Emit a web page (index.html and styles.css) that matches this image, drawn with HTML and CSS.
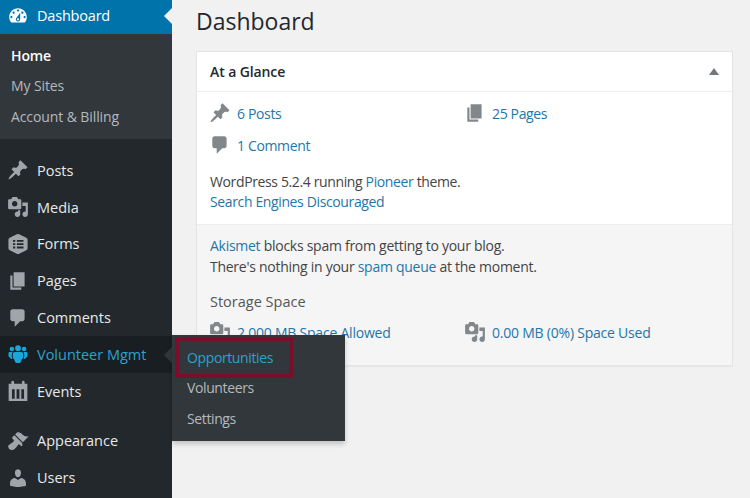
FILE: index.html
```html
<!DOCTYPE html>
<html lang="en">
<head>
<meta charset="utf-8">
<title>Dashboard</title>
<link rel="stylesheet" href="styles.css">
</head>
<body>
<svg class="defs" width="0" height="0" aria-hidden="true">
  <symbol id="i-dash" viewBox="0 0 20 20"><path d="M3.76 16h12.48c1.1-1.37 1.76-3.11 1.76-5 0-4.42-3.58-8-8-8s-8 3.58-8 8c0 1.89.66 3.63 1.76 5zM10 4c.55 0 1 .45 1 1s-.45 1-1 1-1-.45-1-1 .45-1 1-1zM6 6c.55 0 1 .45 1 1s-.45 1-1 1-1-.45-1-1 .45-1 1-1zm8 0c.55 0 1 .45 1 1s-.45 1-1 1-1-.45-1-1 .45-1 1-1zm-5.37 5.55L12 7v6c0 1.1-.9 2-2 2s-2-.9-2-2c0-.57.24-1.08.63-1.45zM4 10c.55 0 1 .45 1 1s-.45 1-1 1-1-.45-1-1 .45-1 1-1zm12 0c.55 0 1 .45 1 1s-.45 1-1 1-1-.45-1-1 .45-1 1-1zm-5 3c0-.55-.45-1-1-1s-1 .45-1 1 .45 1 1 1 1-.45 1-1z"/></symbol>
  <symbol id="i-post" viewBox="0 0 20 20"><path d="M10.44 3.02l1.82-1.82 6.36 6.35-1.83 1.82c-1.05-.68-2.48-.57-3.41.36l-.75.75c-.92.93-1.04 2.35-.35 3.41l-1.83 1.82-2.41-2.41-2.8 2.79c-.42.42-3.38 2.71-3.8 2.29s1.86-3.39 2.28-3.81l2.79-2.79L4.1 9.36l1.83-1.82c1.05.69 2.48.57 3.4-.36l.75-.75c.93-.92 1.05-2.35.36-3.41z"/></symbol>
  <symbol id="i-media" viewBox="0 0 20 20"><path d="M13 11V4c0-.55-.45-1-1-1h-1.67L9 1H5L3.67 3H2c-.55 0-1 .45-1 1v7c0 .55.45 1 1 1h10c.55 0 1-.45 1-1zM7 4.5c1.38 0 2.5 1.12 2.5 2.5S8.38 9.5 7 9.5 4.5 8.38 4.5 7 5.62 4.5 7 4.5zM14 6h5v10.5c0 1.38-1.12 2.5-2.5 2.5S14 17.88 14 16.5s1.12-2.5 2.5-2.5c.17 0 .34.02.5.05V9h-3V6zm-4 8.05V13h2v3.5c0 1.38-1.12 2.5-2.5 2.5S7 17.88 7 16.5 8.12 14 9.5 14c.17 0 .34.02.5.05z"/></symbol>
  <symbol id="i-forms" viewBox="0 0 20 20"><path fill-rule="evenodd" d="M8.900 1.100q1.100-.5 2.200 0l6.400 3.200q1.200.6 1.200 1.900v7.600q0 1.300-1.200 1.900l-6.400 3.200q-1.100.5-2.200 0l-6.400-3.200q-1.200-.6-1.200-1.900V6.200q0-1.300 1.200-1.900zM5.500 6.300v1.700h2V6.300zM9 6.300v1.700h6V6.300zM5.500 9.300V11h2V9.300zM9 9.300V11h6V9.300zM5.500 12.300V14h2v-1.700zM9 12.300V14h6v-1.700z"/></symbol>
  <symbol id="i-page" viewBox="0 0 20 20"><path d="M6 15V2h10v13H6zm-1 1h8v2H3V5h2v11z"/></symbol>
  <symbol id="i-comment" viewBox="0 0 20 20"><path d="M5 2h9c1.100 0 2 .9 2 2v7c0 1.100-.9 2-2 2h-2l-5 5v-5H5c-1.100 0-2-.9-2-2V4c0-1.100.9-2 2-2z"/></symbol>
  <symbol id="i-people" viewBox="-1 -1 22 22"><circle cx="10" cy="4.200" r="2.900"/><circle cx="3.900" cy="5" r="2.300"/><circle cx="16.100" cy="5" r="2.300"/><path d="M6.800 8h6.400c1.200 0 2 .8 2 2v3c0 1-.5 1.700-1.200 2.100l-1.300 3.100c-.3.6-.8.8-1.300.8H8.600c-.5 0-1-.2-1.300-.8L6 15.100C5.300 14.700 4.800 14 4.800 13v-3c0-1.200.8-2 2-2z"/><path d="M1.800 8h2.900c-.5.500-.9 1.200-.9 2v3c0 .8.200 1.400.6 2H3.500c-.4 0-.7-.2-.9-.5L.9 12.800c-.3-.3-.4-.7-.4-1.100V9.300C.5 8.600 1.100 8 1.800 8zM15.300 8h2.900c.7 0 1.300.6 1.300 1.300v2.400c0 .4-.1.800-.4 1.100l-1.700 1.700c-.2.300-.5.500-.9.500h-.9c.4-.6.600-1.200.6-2v-3c0-.8-.4-1.500-.9-2z"/></symbol>
  <symbol id="i-events" viewBox="0 0 20 20"><path fill-rule="evenodd" d="M1.500 3.500h2.500V1.800a1.200 1.200 0 0 1 2.400 0v1.700h7.200V1.800a1.200 1.200 0 0 1 2.400 0v1.700h2.500V19h-17zM4.500 8.500V17H7V8.500zm4.200 0V17h2.600V8.500zm4.300 0V17h2.500V8.500z"/></symbol>
  <symbol id="i-brush" viewBox="0 0 20 20"><path d="M14.480 11.060L7.410 3.990l1.500-1.500c.5-.56 2.300-.47 3.510.32 1.210.8 1.430 1.280 2.910 2.100 1.180.64 2.450 1.260 4.450.85zm-.71.71L6.700 4.700 4.930 6.470c-.39.39-.39 1.020 0 1.410l1.060 1.060c.39.39.39 1.030 0 1.420-.6.6-1.430 1.110-2.210 1.690-.35.26-.7.53-1.010.84C1.430 13.230.91 14.100 1.200 15.790c.32 1.170 1.160 2.220 2.550 2.380 1.680.3 2.520-.23 3.860-1.580.31-.31.58-.66.84-1.010.58-.78 1.090-1.610 1.690-2.210.39-.39 1.030-.39 1.420 0l1.060 1.060c.39.39 1.020.39 1.410 0z"/></symbol>
  <symbol id="i-users" viewBox="0 0 20 20"><path d="M10 9.250c-2.270 0-2.730-3.440-2.730-3.440C7 4.020 7.820 2 9.970 2c2.160 0 2.980 2.020 2.710 3.810 0 0-.41 3.440-2.680 3.440zm0 2.570L12.720 10c2.390 0 4.520 2.330 4.520 4.530v2.490s-3.650 1.130-7.240 1.130c-3.650 0-7.240-1.130-7.240-1.130v-2.490c0-2.250 1.940-4.480 4.470-4.480z"/></symbol>
</svg>

<div class="app">
  <nav class="sidebar">
    <a class="item item-current"><svg class="icon"><use href="#i-dash"/></svg><span>Dashboard</span></a>
    <ul class="submenu">
      <li class="sub-home">Home</li>
      <li>My Sites</li>
      <li>Account &amp; Billing</li>
    </ul>
    <div class="group">
      <a class="item"><svg class="icon"><use href="#i-post"/></svg><span>Posts</span></a>
      <a class="item"><svg class="icon"><use href="#i-media"/></svg><span>Media</span></a>
      <a class="item"><svg class="icon"><use href="#i-forms"/></svg><span>Forms</span></a>
      <a class="item"><svg class="icon"><use href="#i-page"/></svg><span>Pages</span></a>
      <a class="item"><svg class="icon"><use href="#i-comment"/></svg><span>Comments</span></a>
      <div class="item item-open">
        <svg class="icon"><use href="#i-people"/></svg><span>Volunteer Mgmt</span>
        <div class="flyout">
          <div class="fly-row fly-active">Opportunities</div>
          <div class="fly-row">Volunteers</div>
          <div class="fly-row">Settings</div>
          <div class="highlight"></div>
        </div>
      </div>
      <a class="item"><svg class="icon"><use href="#i-events"/></svg><span>Events</span></a>
    </div>
    <div class="group group-last">
      <a class="item"><svg class="icon"><use href="#i-brush"/></svg><span>Appearance</span></a>
      <a class="item"><svg class="icon"><use href="#i-users"/></svg><span>Users</span></a>
    </div>
  </nav>

  <main class="main">
    <h1 class="title">Dashboard</h1>
    <section class="card">
      <header class="card-head">
        <h2>At a Glance</h2>
        <span class="caret"></span>
      </header>
      <div class="card-body">
        <div class="counts">
          <a class="count"><svg class="count-icon"><use href="#i-post"/></svg>6 Posts</a>
          <a class="count"><svg class="count-icon"><use href="#i-page"/></svg>25 Pages</a>
          <a class="count"><svg class="count-icon"><use href="#i-comment"/></svg>1 Comment</a>
        </div>
        <p class="version">WordPress 5.2.4 running <a>Pioneer</a> theme.<br><a>Search Engines Discouraged</a></p>
      </div>
      <div class="card-foot">
        <p class="akismet"><a>Akismet</a> blocks spam from getting to your blog.<br>There's nothing in your <a>spam queue</a> at the moment.</p>
        <h3>Storage Space</h3>
        <div class="storage">
          <a class="count"><svg class="count-icon"><use href="#i-media"/></svg>2,000 MB Space Allowed</a>
          <a class="count"><svg class="count-icon"><use href="#i-media"/></svg>0.00 MB (0%) Space Used</a>
        </div>
      </div>
    </section>
  </main>
</div>
</body>
</html>
```

FILE: styles.css
```css
* { box-sizing: border-box; }
html, body { height: 100%; }
body {
  margin: 0;
  overflow: hidden;
  background: #f1f1f1;
  font-family: "Open Sans", "Noto Sans", sans-serif;
  font-size: 14px;
  color: #444;
}
.defs { position: absolute; }
a { color: #1f76a8; text-decoration: none; }
ul { list-style: none; margin: 0; padding: 0; }
p, h1, h2, h3 { margin: 0; }

.app { display: flex; height: 498px; overflow: hidden; }

.sidebar {
  flex: 0 0 172px;
  height: 498px;
  background: #23282d;
  color: #eee;
}
.item {
  position: relative;
  display: flex;
  align-items: center;
  gap: 8px;
  height: 36.8px;
  padding-left: 7px;
  color: #e6e8e9;
  font-size: 14.5px;
}
.icon {
  flex: 0 0 22px;
  width: 22px;
  height: 22px;
  fill: #a0a5aa;
}
.item-current {
  height: 34px;
  padding-bottom: 3px;
  background: #0073aa;
  color: #fff;
  letter-spacing: -.2px;
}
.item-current .icon { fill: #fff; }
.item-current::after {
  content: "";
  position: absolute;
  right: 0;
  top: 8px;
  border: 8px solid transparent;
  border-right-color: #f1f1f1;
  border-left-width: 0;
}
.submenu {
  height: 105px;
  padding-top: 6.600px;
  background: #32373c;
  color: #b4b9be;
}
.submenu li {
  height: 30.5px;
  line-height: 30px;
  padding-left: 11px;
  font-size: 14px;
  letter-spacing: -.1px;
}
.submenu .sub-home { color: #fff; font-weight: 600; }

.group { padding-top: 13px; }
.group-last { padding-top: 12.800px; }

.item-open {
  background: #191e23;
  color: #2aa3cc;
}
.item-open .icon { fill: #18a7d8; }
.item-open::after {
  content: "";
  position: absolute;
  right: 0;
  top: 11px;
  border: 8px solid transparent;
  border-right-color: #32373c;
  border-left-width: 0;
}
.flyout {
  position: absolute;
  z-index: 5;
  left: 172px;
  top: -1px;
  width: 173px;
  height: 106px;
  padding-top: 7.900px;
  background: #32373c;
  box-shadow: 0 3px 5px rgba(0, 0, 0, .2);
  color: #b4b9be;
}
.fly-row {
  height: 30.500px;
  line-height: 30px;
  padding-left: 15px;
  font-size: 14px;
  letter-spacing: -.38px;
}
.fly-active { color: #2aa3cc; }
.highlight {
  position: absolute;
  left: 3px;
  top: 2px;
  width: 118px;
  height: 41px;
  border: 4px solid #7a0f2b;
}

.main { flex: 1; padding: 0 17px 0 24px; min-width: 0; }
.title {
  height: 51px;
  padding-top: 5px;
  font-size: 23px;
  font-weight: 400;
  line-height: 33px;
  color: #23282d;
}
.card {
  height: 315px;
  background: #fff;
  border: 1px solid #e5e5e5;
  box-shadow: 0 1px 1px rgba(0, 0, 0, .04);
}
.card-head {
  display: flex;
  align-items: center;
  justify-content: space-between;
  height: 40px;
  padding: 0 13px;
  border-bottom: 1px solid #eee;
}
.card-head h2 { font-size: 14px; font-weight: 600; color: #23282d; letter-spacing: -.1px; }
.caret {
  width: 0;
  height: 0;
  border: 5px solid transparent;
  border-top-width: 0;
  border-bottom: 7px solid #72777c;
}
.card-body { height: 132px; padding: 5px 13px 0; }
.counts {
  display: grid;
  grid-template-columns: 255px 1fr;
  grid-auto-rows: 32px;
}
.count {
  display: flex;
  align-items: center;
  gap: 6px;
  font-size: 14px;
  letter-spacing: -.35px;
}
.count-icon {
  flex: 0 0 22px;
  width: 22px;
  height: 22px;
  margin-left: -1px;
  fill: #82878c;
}
.version { margin-top: 11px; line-height: 20px; font-size: 14px; letter-spacing: -.37px; }
.card-foot {
  height: 141px;
  padding: 10px 13px 0;
  background: #f5f5f5;
  border-top: 1px solid #eee;
}
.akismet { line-height: 21px; font-size: 14px; letter-spacing: -.27px; }
.card-foot h3 {
  margin-top: 13px;
  font-size: 14.500px;
  font-weight: 400;
  line-height: 24px;
  color: #555;
}
.storage {
  display: grid;
  grid-template-columns: 255px 1fr;
  margin-top: 6px;
  height: 24px;
}
.storage .count { letter-spacing: -.22px; }
```
